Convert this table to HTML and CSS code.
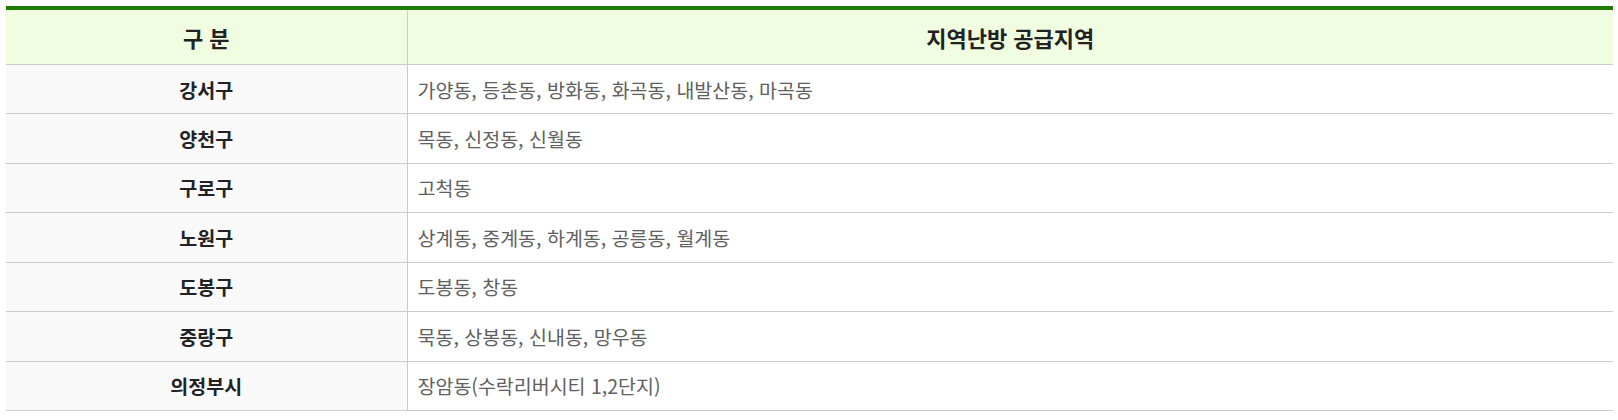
FILE: index.html
```html
<!DOCTYPE html>
<html lang="ko">
<head>
<meta charset="utf-8">
<title>지역난방 공급지역</title>
<link rel="stylesheet" href="styles.css">
</head>
<body>
<table class="supply">
  <colgroup>
    <col class="col-gu">
    <col class="col-area">
  </colgroup>
  <thead>
    <tr>
      <th>구 분</th>
      <th>지역난방 공급지역</th>
    </tr>
  </thead>
  <tbody>
    <tr><th>강서구</th><td>가양동, 등촌동, 방화동, 화곡동, 내발산동, 마곡동</td></tr>
    <tr><th>양천구</th><td>목동, 신정동, 신월동</td></tr>
    <tr><th>구로구</th><td>고척동</td></tr>
    <tr><th>노원구</th><td>상계동, 중계동, 하계동, 공릉동, 월계동</td></tr>
    <tr><th>도봉구</th><td>도봉동, 창동</td></tr>
    <tr><th>중랑구</th><td>묵동, 상봉동, 신내동, 망우동</td></tr>
    <tr><th>의정부시</th><td>장암동(수락리버시티 1,2단지)</td></tr>
  </tbody>
</table>
</body>
</html>
```

FILE: styles.css
```css
html, body {
  margin: 0;
  padding: 0;
  background: #ffffff;
}
body {
  padding: 6px 5px 0 6px;
  font-family: "Noto Sans CJK KR", "Noto Sans", sans-serif;
}
.supply {
  width: 1607px;
  border-collapse: collapse;
  border-top: 4px solid #1f7a00;
  table-layout: fixed;
}
.col-gu { width: 401px; }
.supply thead th {
  height: 54px;
  padding: 0;
  background: #f0fde0;
  color: #222222;
  font-size: 22px;
  line-height: 1.2;
  font-weight: 700;
  text-align: center;
  border-bottom: 1px solid #cccccc;
  border-left: 1px solid #cccccc;
}
.supply thead th:first-child { border-left: none; }
.supply tbody th,
.supply tbody td {
  height: 48.43px;
  padding: 0;
  border-bottom: 1px solid #cccccc;
  font-size: 19.5px;
  line-height: 1.2;
}
.supply tbody th {
  background: #f9f9f9;
  color: #222222;
  font-weight: 700;
  text-align: center;
}
.supply tbody td {
  border-left: 1px solid #cccccc;
  padding-left: 10px;
  color: #606060;
  text-align: left;
}
```
